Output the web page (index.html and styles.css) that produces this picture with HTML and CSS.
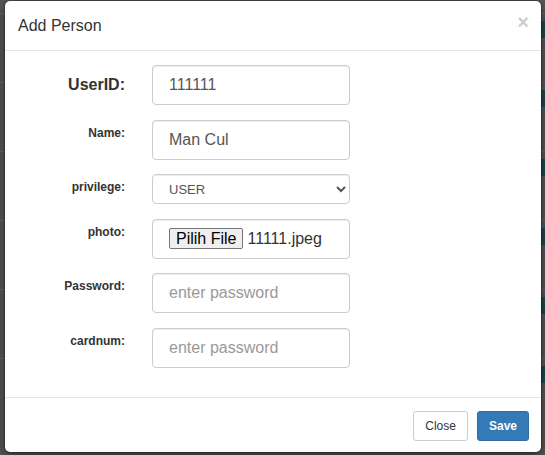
FILE: index.html
```html
<!DOCTYPE html>
<html lang="id">
<head>
<meta charset="utf-8">
<title>Add Person</title>
<link rel="stylesheet" href="styles.css">
</head>
<body>
<div class="page">
  <div class="bg-row bg-first"></div>
  <div class="bg-row"><span class="bg-btn"></span></div>
  <div class="bg-row"><span class="bg-btn"></span></div>
  <div class="bg-row"><span class="bg-btn"></span></div>
  <div class="bg-row"><span class="bg-btn"></span></div>
  <div class="bg-row"><span class="bg-btn"></span></div>
  <div class="bg-row"><span class="bg-btn"></span></div>
</div>

<div class="modal">
  <div class="modal-header">
    <h4 class="modal-title">Add Person</h4>
    <button type="button" class="close">&times;</button>
  </div>
  <form class="modal-body">
    <div class="form-row">
      <label class="lbl lbl-lg">UserID:</label>
      <input class="ctl" type="text" value="111111">
    </div>
    <div class="form-row">
      <label class="lbl">Name:</label>
      <input class="ctl" type="text" value="Man Cul">
    </div>
    <div class="form-row">
      <label class="lbl">privilege:</label>
      <select class="ctl ctl-select">
        <option>USER</option>
        <option>ADMIN</option>
      </select>
    </div>
    <div class="form-row">
      <label class="lbl">photo:</label>
      <div class="ctl ctl-file">
        <span class="file-btn">Pilih File</span>
        <span class="file-name">11111.jpeg</span>
      </div>
    </div>
    <div class="form-row">
      <label class="lbl">Password:</label>
      <input class="ctl" type="password" placeholder="enter password">
    </div>
    <div class="form-row">
      <label class="lbl">cardnum:</label>
      <input class="ctl" type="text" placeholder="enter password">
    </div>
  </form>
  <div class="modal-footer">
    <button type="button" class="btn btn-default">Close</button>
    <button type="button" class="btn btn-primary">Save</button>
  </div>
</div>
</body>
</html>
```

FILE: styles.css
```css
html, body {
  margin: 0;
  padding: 0;
}

body {
  background: #5a5a5a;
  font-family: "Liberation Sans", Arial, sans-serif;
  color: #333;
  width: 545px;
  height: 455px;
  overflow: hidden;
  position: relative;
}

/* dimmed page behind the dialog */
.page {
  display: flex;
  flex-direction: column;
}

.bg-row {
  height: 69px;
  box-sizing: border-box;
  border-top: 1px solid #6a6a6a;
  display: flex;
  justify-content: flex-end;
  align-items: flex-start;
}

.bg-first {
  height: 13px;
  border-top: 0;
}

.bg-btn {
  width: 14px;
  height: 17px;
  margin-top: 7px;
  background: #1f4a55;
}

/* dialog */
.modal {
  position: absolute;
  left: 4px;
  top: 0;
  width: 538px;
  box-sizing: border-box;
  background: #fff;
  border: 1px solid rgba(0, 0, 0, 0.2);
  background-clip: padding-box;
  border-radius: 6px;
  box-shadow: 0 5px 15px rgba(0, 0, 0, 0.5);
}

.modal-header {
  display: flex;
  justify-content: space-between;
  align-items: flex-start;
  padding: 15px 12px 14px 13px;
  border-bottom: 1px solid #e5e5e5;
}

.modal-title {
  margin: 0;
  font-size: 16px;
  line-height: 20px;
  font-weight: normal;
  color: #333;
}

.close {
  margin-top: -4px;
  padding: 0;
  border: 0;
  background: transparent;
  font-family: "Liberation Sans", Arial, sans-serif;
  font-size: 20px;
  font-weight: bold;
  line-height: 21px;
  color: #000;
  opacity: 0.2;
}

.modal-body {
  margin: 0;
  padding: 14px 13px 29px;
  display: flex;
  flex-direction: column;
  gap: 14.6px;
}

.form-row {
  display: grid;
  grid-template-columns: 107px 198px;
  column-gap: 27px;
  align-items: start;
}

.lbl {
  text-align: right;
  font-size: 12px;
  line-height: 17px;
  font-weight: bold;
  padding-top: 5px;
  color: #333;
}

.lbl-lg {
  font-size: 16px;
  line-height: 40px;
  padding-top: 0;
}

.ctl {
  box-sizing: border-box;
  width: 198px;
  height: 40px;
  margin: 0;
  padding: 0 16px;
  border: 1px solid #ccc;
  border-radius: 4px;
  background: #fff;
  box-shadow: inset 0 1px 1px rgba(0, 0, 0, 0.075);
  font-family: "Liberation Sans", Arial, sans-serif;
  font-size: 16px;
  color: #555;
}

.ctl::placeholder {
  color: #999;
}

.ctl-select {
  height: 30px;
  padding: 0 8px 0 12px;
  font-size: 13px;
  color: #555;
}

.ctl-file {
  display: flex;
  align-items: center;
}

.file-btn {
  box-sizing: border-box;
  height: 21px;
  padding: 0 6px;
  border: 1px solid #767676;
  border-radius: 2px;
  background: #efefef;
  color: #000;
  font-size: 16px;
  line-height: 19px;
}

.file-name {
  margin-left: 4px;
  color: #333;
  font-size: 16px;
}

.modal-footer {
  display: flex;
  justify-content: flex-end;
  gap: 9px;
  padding: 13px 12px 11px;
  border-top: 1px solid #e5e5e5;
}

.btn {
  box-sizing: border-box;
  height: 30px;
  padding: 5px 11px;
  border: 1px solid transparent;
  border-radius: 3px;
  font-family: "Liberation Sans", Arial, sans-serif;
  font-size: 12px;
  line-height: 18px;
}

.btn-default {
  background: #fff;
  border-color: #ccc;
  color: #333;
}

.btn-primary {
  background: #337ab7;
  border-color: #2e6da4;
  color: #fff;
  font-weight: bold;
}
```
